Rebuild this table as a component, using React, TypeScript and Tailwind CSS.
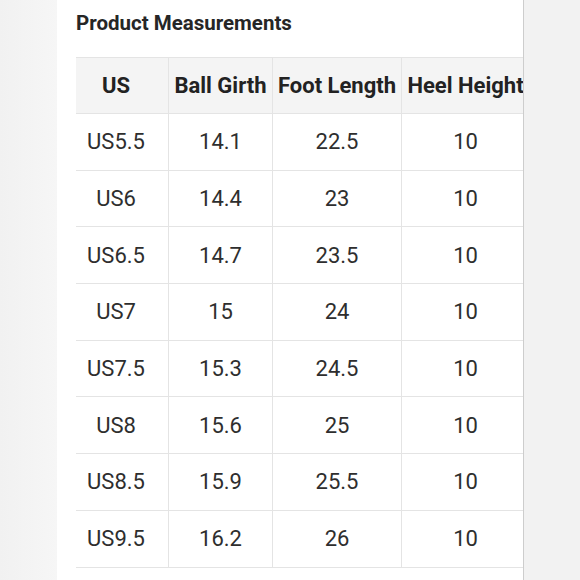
import React from "react";

const rows = [
  ["US5.5", "14.1", "22.5", "10"],
  ["US6", "14.4", "23", "10"],
  ["US6.5", "14.7", "23.5", "10"],
  ["US7", "15", "24", "10"],
  ["US7.5", "15.3", "24.5", "10"],
  ["US8", "15.6", "25", "10"],
  ["US8.5", "15.9", "25.5", "10"],
  ["US9.5", "16.2", "26", "10"],
];

const headers = ["US", "Ball Girth", "Foot Length", "Heel Height"];
const widths = ["w-[92px] pr-[12px]", "w-[104px]", "w-[129px]", "w-[128px]"];

export default function App() {
  return (
    <div
      className="flex h-[580px] w-[580px] overflow-hidden bg-white"
      style={{ fontFamily: "Roboto, 'Liberation Sans', sans-serif" }}
    >
      <div className="h-full w-[57px] shrink-0 bg-gradient-to-r from-[#f1f1f1] to-[#f6f6f6]" />
      <div className="h-full w-[467px] shrink-0 overflow-hidden border-r border-[#cdcdcd] bg-white pl-[19px]">
        <div className="pt-[10px] text-[20.5px] font-bold leading-[26px] text-[#262626]">
          Product Measurements
        </div>
        <div className="mt-[21px] w-[453px] border-t border-[#e4e4e4]">
          <div className="flex h-[56px] border-b border-[#e4e4e4] bg-[#f4f4f4]">
            {headers.map((h, i) => (
              <div
                key={h}
                className={`${widths[i]} flex shrink-0 items-center justify-center whitespace-nowrap text-[22px] font-bold text-[#222] ${i > 0 ? "border-l border-[#e4e4e4]" : ""}`}
              >
                {h}
              </div>
            ))}
          </div>
          {rows.map((r) => (
            <div key={r[0]} className="flex h-[56.7px] border-b border-[#e4e4e4]">
              {r.map((c, i) => (
                <div
                  key={i}
                  className={`${widths[i]} flex shrink-0 items-center justify-center text-[22px] text-[#2e2e2e] ${i > 0 ? "border-l border-[#e4e4e4]" : ""}`}
                >
                  {c}
                </div>
              ))}
            </div>
          ))}
        </div>
      </div>
      <div className="h-full flex-1 bg-[#f2f2f2]" />
    </div>
  );
}
